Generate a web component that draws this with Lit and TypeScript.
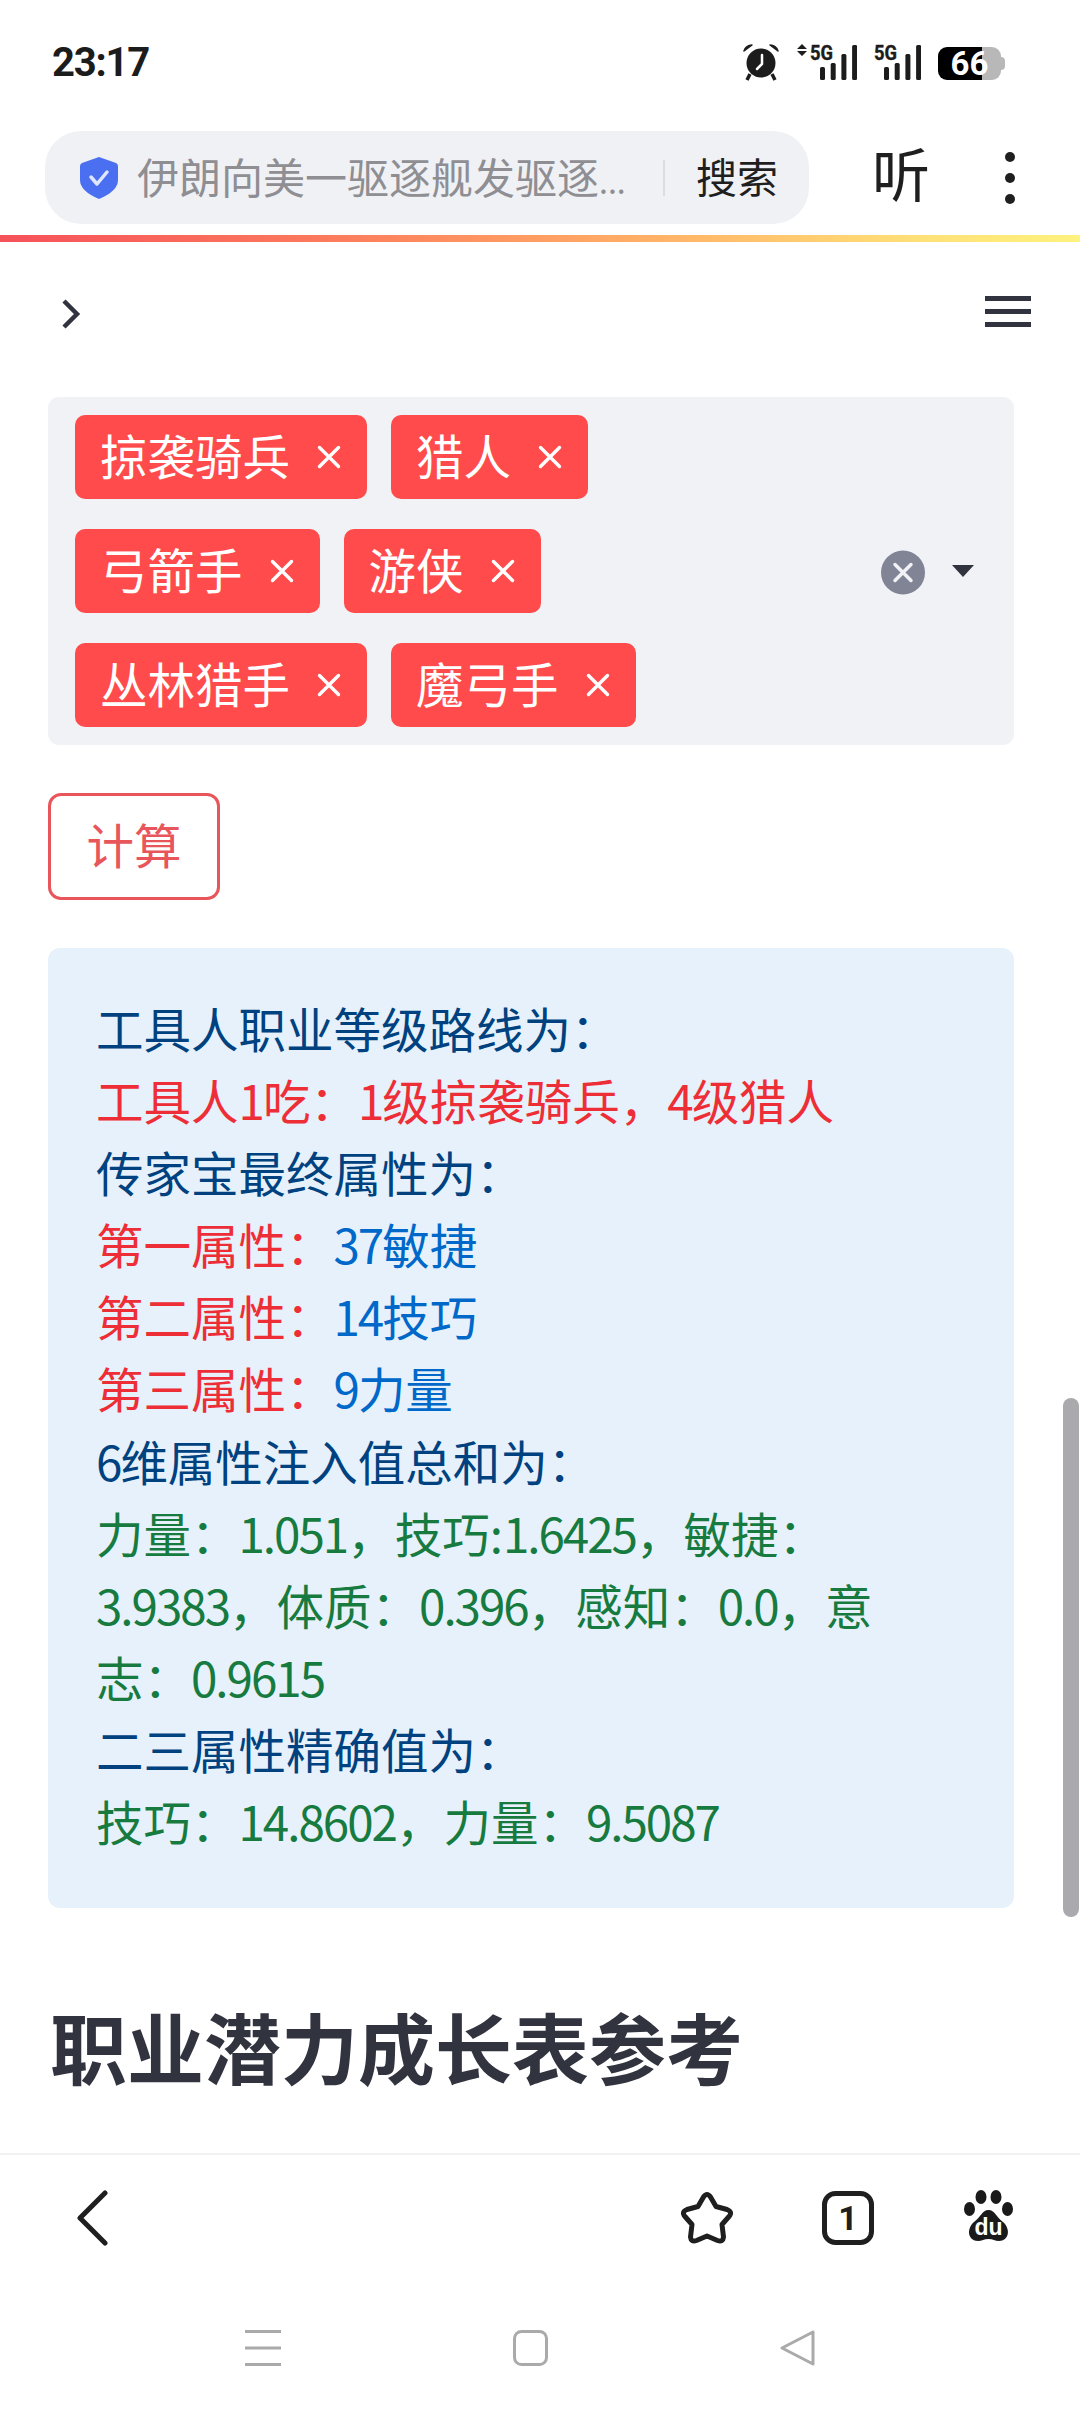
import { LitElement, html, css, svg } from "lit";
import { customElement } from "lit/decorators.js";

type Seg = [string, string];

const TAGS = [
  ["掠袭骑兵", "猎人"],
  ["弓箭手", "游侠"],
  ["丛林猎手", "魔弓手"],
];

const LINES: Seg[][] = [
  [["工具人职业等级路线为：", "info"]],
  [["工具人1吃：1级掠袭骑兵，4级猎人", "red"]],
  [["传家宝最终属性为：", "info"]],
  [["第一属性：", "red"], ["37敏捷", "blue"]],
  [["第二属性：", "red"], ["14技巧", "blue"]],
  [["第三属性：", "red"], ["9力量", "blue"]],
  [["6维属性注入值总和为：", "info"]],
  [["力量：1.051，技巧:1.6425，敏捷：", "green"]],
  [["3.9383，体质：0.396，感知：0.0，意", "green"]],
  [["志：0.9615", "green"]],
  [["二三属性精确值为：", "info"]],
  [["技巧：14.8602，力量：9.5087", "green"]],
];

// digits sit tighter than the CJK cells around them
const withNums = (text: string) =>
  text
    .split(/([\d.]+)/)
    .map((part, i) => (i % 2 ? html`<span class="num">${part}</span>` : part));

const signal = (arrows: boolean) => {
  const x0 = arrows ? 23 : 10;
  return html`<svg width=${arrows ? 60 : 47} height="46" viewBox="0 0 ${arrows ? 60 : 47} 46">
    ${arrows
      ? svg`<path d="M5 10 L10 15 H0 Z M5 22 L10 17 H0 Z" fill="#1c1c1c" />`
      : ""}
    <text x=${arrows ? 13 : 0} y="26" class="five-g" textLength="23" lengthAdjust="spacingAndGlyphs">5G</text>
    ${[0, 1, 2, 3].map((i) => {
      const top = [33, 29, 20, 11][i];
      return svg`<rect x=${x0 + i * 10.7} y=${top} width="5" height=${46 - top} rx="1.5" fill="#1c1c1c" />`;
    })}
  </svg>`;
};

@customElement("app-root")
export class AppRoot extends LitElement {
  static styles = css`
    :host {
      display: flex;
      flex-direction: column;
      position: relative;
      width: 1080px;
      height: 2414px;
      overflow: hidden;
      background: #fff;
      font-family: "Noto Sans CJK SC", "Noto Sans", sans-serif;
    }

    .status {
      height: 131px;
      box-sizing: border-box;
      padding: 34px 79px 0 52px;
      display: flex;
      justify-content: space-between;
      align-items: flex-start;
      flex: none;
    }
    .time {
      margin-top: 11px;
      font-family: Roboto, sans-serif;
      font-weight: 700;
      font-size: 40px;
      line-height: 36px;
      letter-spacing: -1.2px;
      color: #1c1c1c;
    }
    .status-icons {
      display: flex;
      gap: 17px;
      align-items: flex-start;
    }
    .alarm {
      margin-top: 10px;
    }
    .five-g {
      font-family: Roboto, sans-serif;
      font-weight: 700;
      font-size: 21px;
      fill: #1c1c1c;
      stroke: #1c1c1c;
      stroke-width: 0.4px;
    }
    .battery {
      position: relative;
      width: 63px;
      height: 33px;
      margin-top: 13px;
      border-radius: 9px;
      background: linear-gradient(90deg, #000 0 44px, #b8b8b8 44px);
      color: #fff;
      font: 700 33px/33px Roboto, sans-serif;
      text-align: center;
    }
    .battery::after {
      content: "";
      position: absolute;
      right: -4px;
      top: 10px;
      width: 4px;
      height: 13px;
      border-radius: 0 4px 4px 0;
      background: #b8b8b8;
    }

    .toolbar {
      height: 104px;
      flex: none;
      display: flex;
      align-items: flex-start;
      padding-left: 45px;
    }
    .address {
      width: 764px;
      height: 93px;
      box-sizing: border-box;
      border-radius: 36px;
      background: #f0f1f5;
      display: flex;
      align-items: center;
      padding-left: 35px;
    }
    .address-text {
      margin-left: 19px;
      width: 492px;
      font-size: 42px;
      line-height: 60px;
      color: #8e8e93;
      white-space: nowrap;
    }
    .ellipsis {
      font-size: 32px;
    }
    .divider {
      width: 2px;
      height: 36px;
      margin-left: 34px;
      background: #dcdcdf;
    }
    .search {
      margin: -5px 0 0 31px;
      font-size: 41px;
      line-height: 60px;
      color: #1f1f1f;
      white-space: nowrap;
    }
    .listen {
      margin-left: 63px;
      margin-top: 6px;
      font-size: 58px;
      line-height: 70px;
      color: #1f1f1f;
    }
    .dots {
      margin-left: 75px;
      margin-top: 21px;
      display: flex;
      flex-direction: column;
      gap: 11px;
    }
    .dots span {
      width: 10px;
      height: 10px;
      border-radius: 50%;
      background: #1f1f1f;
    }
    .progress {
      height: 7px;
      flex: none;
      background: linear-gradient(90deg, #f6515a 0%, #fc7a5c 30%, #ffb066 60%, #ffe077 85%, #fff27e 100%);
    }

    .content {
      flex: 1;
      min-height: 0;
      overflow: hidden;
      padding: 0 66px 0 48px;
    }
    .header {
      height: 155px;
      box-sizing: border-box;
      padding: 54px 0 0 13px;
      display: flex;
      justify-content: space-between;
      align-items: flex-start;
    }
    .chevron {
      margin-top: 3px;
    }
    .menu {
      margin-right: -17px;
      display: flex;
      flex-direction: column;
      gap: 8px;
    }
    .menu span {
      width: 46px;
      height: 5px;
      background: #31333f;
    }

    .select {
      height: 348px;
      box-sizing: border-box;
      border-radius: 11px;
      background: #f0f2f6;
      padding-left: 27px;
      display: flex;
      align-items: center;
    }
    .tags {
      flex: 1;
      display: flex;
      flex-direction: column;
      gap: 30px;
    }
    .tag-row {
      display: flex;
      gap: 24px;
    }
    .tag {
      height: 84px;
      box-sizing: border-box;
      padding: 0 26px 0 25px;
      border-radius: 10px;
      background: #ff4b4b;
      color: #fff;
      font-size: 47.5px;
      line-height: 70px;
      display: flex;
      align-items: center;
      gap: 27px;
      white-space: nowrap;
    }
    .tag-text {
      margin-top: -5px;
    }
    .clear {
      width: 44px;
      height: 45px;
      margin-top: 2px;
      flex: none;
    }
    .caret {
      margin: 0 40px 0 27px;
      flex: none;
    }

    .button {
      display: block;
      margin: 48px 0;
      width: 172px;
      height: 107px;
      box-sizing: border-box;
      border: 3.5px solid #e8555b;
      border-radius: 13px;
      background: #fff;
      color: #e8555b;
      font: inherit;
      font-size: 47.5px;
      line-height: 94px;
      padding: 0 0 6px;
      text-align: center;
    }

    .info {
      height: 960px;
      box-sizing: border-box;
      padding: 44px 48px 0;
      border-radius: 12px;
      background: #e6f1fc;
      font-size: 47.5px;
      line-height: 72.1px;
    }
    .line {
      white-space: nowrap;
    }
    .num {
      letter-spacing: -2px;
    }
    .c-info {
      color: #00427f;
    }
    .c-red {
      color: #ee2e36;
    }
    .c-blue {
      color: #0068c9;
    }
    .c-green {
      color: #177b3f;
    }

    h2 {
      margin: 92px 0 0 2px;
      font-size: 77px;
      line-height: 92px;
      font-weight: 700;
      color: #31333f;
      white-space: nowrap;
    }

    .scrollbar {
      position: absolute;
      left: 1063px;
      top: 1398px;
      width: 16px;
      height: 519px;
      border-radius: 8px;
      background: #a9a9ae;
    }

    .bottom-bar {
      height: 137px;
      flex: none;
      box-sizing: border-box;
      border-top: 2px solid #f1f1f1;
      padding: 35px 67px 0 77px;
      display: flex;
      align-items: flex-start;
    }
    .bottom-bar .back {
      margin-right: auto;
    }
    .bottom-bar .tabs {
      margin: 1px 90px 0 87px;
    }
    .nav {
      height: 124px;
      flex: none;
      box-sizing: border-box;
      padding: 40px 0 0 245px;
      display: flex;
      align-items: flex-start;
      gap: 232px;
    }
    .tab-num {
      font-family: Roboto, sans-serif;
      font-weight: 700;
      font-size: 34px;
      fill: #1f1f1f;
    }
    .du {
      font-family: "Liberation Sans", sans-serif;
      font-weight: 700;
      font-size: 23px;
      fill: #fff;
    }
  `;

  private renderStatus() {
    return html`<div class="status">
      <span class="time">23:17</span>
      <div class="status-icons">
        <svg class="alarm" width="38" height="37" viewBox="0 0 38 37">
          <circle cx="19" cy="19" r="14.5" fill="#1c1c1c" />
          <path d="M2 7 Q4 1 10 1 Z M36 7 Q34 1 28 1 Z" fill="#1c1c1c" stroke="#1c1c1c" stroke-width="1.5" stroke-linejoin="round" />
          <path d="M8 30 L5 36 M30 30 L33 36" stroke="#1c1c1c" stroke-width="3.5" />
          <path d="M20 11 V20 L15 25" stroke="#fff" stroke-width="2.5" fill="none" stroke-linecap="round" />
        </svg>
        ${signal(true)} ${signal(false)}
        <div class="battery">66</div>
      </div>
    </div>`;
  }

  private renderToolbar() {
    return html`<div class="toolbar">
        <div class="address">
          <svg width="38" height="42" viewBox="0 0 38 42" style="flex:none">
            <path d="M19 0 L36 6 Q38 7 38 9 V23 Q38 34 19 42 Q0 34 0 23 V9 Q0 7 2 6 Z" fill="#4a6ff0" />
            <path d="M11 20 L17 27 L27 15" stroke="#dfe6ff" stroke-width="3.5" fill="none" stroke-linecap="round" stroke-linejoin="round" />
          </svg>
          <span class="address-text">伊朗向美一驱逐舰发驱逐<span class="ellipsis">...</span></span>
          <span class="divider"></span>
          <span class="search">搜索</span>
        </div>
        <span class="listen">听</span>
        <div class="dots"><span></span><span></span><span></span></div>
      </div>
      <div class="progress"></div>`;
  }

  private renderSelect() {
    return html`<div class="select">
      <div class="tags">
        ${TAGS.map(
          (row) => html`<div class="tag-row">
            ${row.map(
              (t) => html`<span class="tag">
                <span class="tag-text">${t}</span>
                <svg width="24" height="24" viewBox="0 0 24 24" style="flex:none">
                  <path d="M2.5 2.5 L21.5 21.5 M21.5 2.5 L2.5 21.5" stroke="#fff" stroke-width="3.4" stroke-linecap="round" fill="none" />
                </svg>
              </span>`
            )}
          </div>`
        )}
      </div>
      <svg class="clear" viewBox="0 0 44 45">
        <circle cx="22" cy="22.5" r="22" fill="#808495" />
        <path d="M14 14.5 L30 30.5 M30 14.5 L14 30.5" stroke="#f0f2f6" stroke-width="3.5" stroke-linecap="round" />
      </svg>
      <svg class="caret" width="22" height="12" viewBox="0 0 22 12">
        <path d="M0 0 H22 L11 12 Z" fill="#31333f" />
      </svg>
    </div>`;
  }

  private renderBottom() {
    return html`<div class="bottom-bar">
        <svg class="back" width="32" height="56" viewBox="0 0 32 56">
          <path d="M28 3 L3 28 L28 53" stroke="#1f1f1f" stroke-width="5" fill="none" stroke-linecap="round" stroke-linejoin="round" />
        </svg>
        <svg width="56" height="56" viewBox="0 0 56 56">
          <path d="M24.5 7 Q28 2 31.5 7 L37 16.5 L48 19.5 Q54 22 50 26.5 L43 34.5 L44.5 47 Q44 52.5 38.5 50.5 L28 46 L17.5 50.5 Q12 52.5 11.5 47 L13 34.5 L6 26.5 Q2 22 8 19.5 L19 16.5 Z" fill="none" stroke="#1f1f1f" stroke-width="5" stroke-linejoin="round" />
        </svg>
        <svg class="tabs" width="52" height="54" viewBox="0 0 52 54">
          <rect x="2.5" y="2.5" width="47" height="49" rx="11" fill="none" stroke="#1f1f1f" stroke-width="5" />
          <text x="26" y="39" text-anchor="middle" class="tab-num">1</text>
        </svg>
        <svg width="49" height="52" viewBox="0 0 49 52">
          <ellipse cx="17" cy="7" rx="5.5" ry="7" fill="#1a1a1a" />
          <ellipse cx="32" cy="7" rx="5.5" ry="7" fill="#1a1a1a" />
          <ellipse cx="5.5" cy="19" rx="5.5" ry="7" fill="#1a1a1a" />
          <ellipse cx="43.5" cy="19" rx="5.5" ry="7" fill="#1a1a1a" />
          <path d="M24.5 20 C31 20 32 27 39 32 C47 39 45 51 35 51 C31 51 29 49 24.5 49 C20 49 18 51 14 51 C4 51 2 39 10 32 C17 27 18 20 24.5 20 Z" fill="#1a1a1a" />
          <text x="24.5" y="45" text-anchor="middle" class="du">du</text>
        </svg>
      </div>
      <div class="nav">
        <svg width="36" height="36" viewBox="0 0 36 36">
          <path d="M0 1.5 H36 M0 18 H36 M0 34.5 H36" stroke="#aaa" stroke-width="3" />
        </svg>
        <svg width="35" height="36" viewBox="0 0 35 36">
          <rect x="1.5" y="1.5" width="32" height="33" rx="7" fill="none" stroke="#aaa" stroke-width="3" />
        </svg>
        <svg width="35" height="36" viewBox="0 0 35 36">
          <path d="M33 2 V34 L2 18 Z" fill="none" stroke="#aaa" stroke-width="3" stroke-linejoin="round" />
        </svg>
      </div>`;
  }

  render() {
    return html`
      ${this.renderStatus()} ${this.renderToolbar()}
      <div class="content">
        <div class="header">
          <svg class="chevron" width="20" height="30" viewBox="0 0 20 30">
            <path d="M3 2 L16 15 L3 28" stroke="#31333f" stroke-width="4.5" fill="none" />
          </svg>
          <div class="menu"><span></span><span></span><span></span></div>
        </div>
        ${this.renderSelect()}
        <button class="button">计算</button>
        <div class="info">
          ${LINES.map(
            (segs) => html`<div class="line">
              ${segs.map(([t, c]) => html`<span class="c-${c}">${withNums(t)}</span>`)}
            </div>`
          )}
        </div>
        <h2>职业潜力成长表参考</h2>
      </div>
      <div class="scrollbar"></div>
      ${this.renderBottom()}
    `;
  }
}
